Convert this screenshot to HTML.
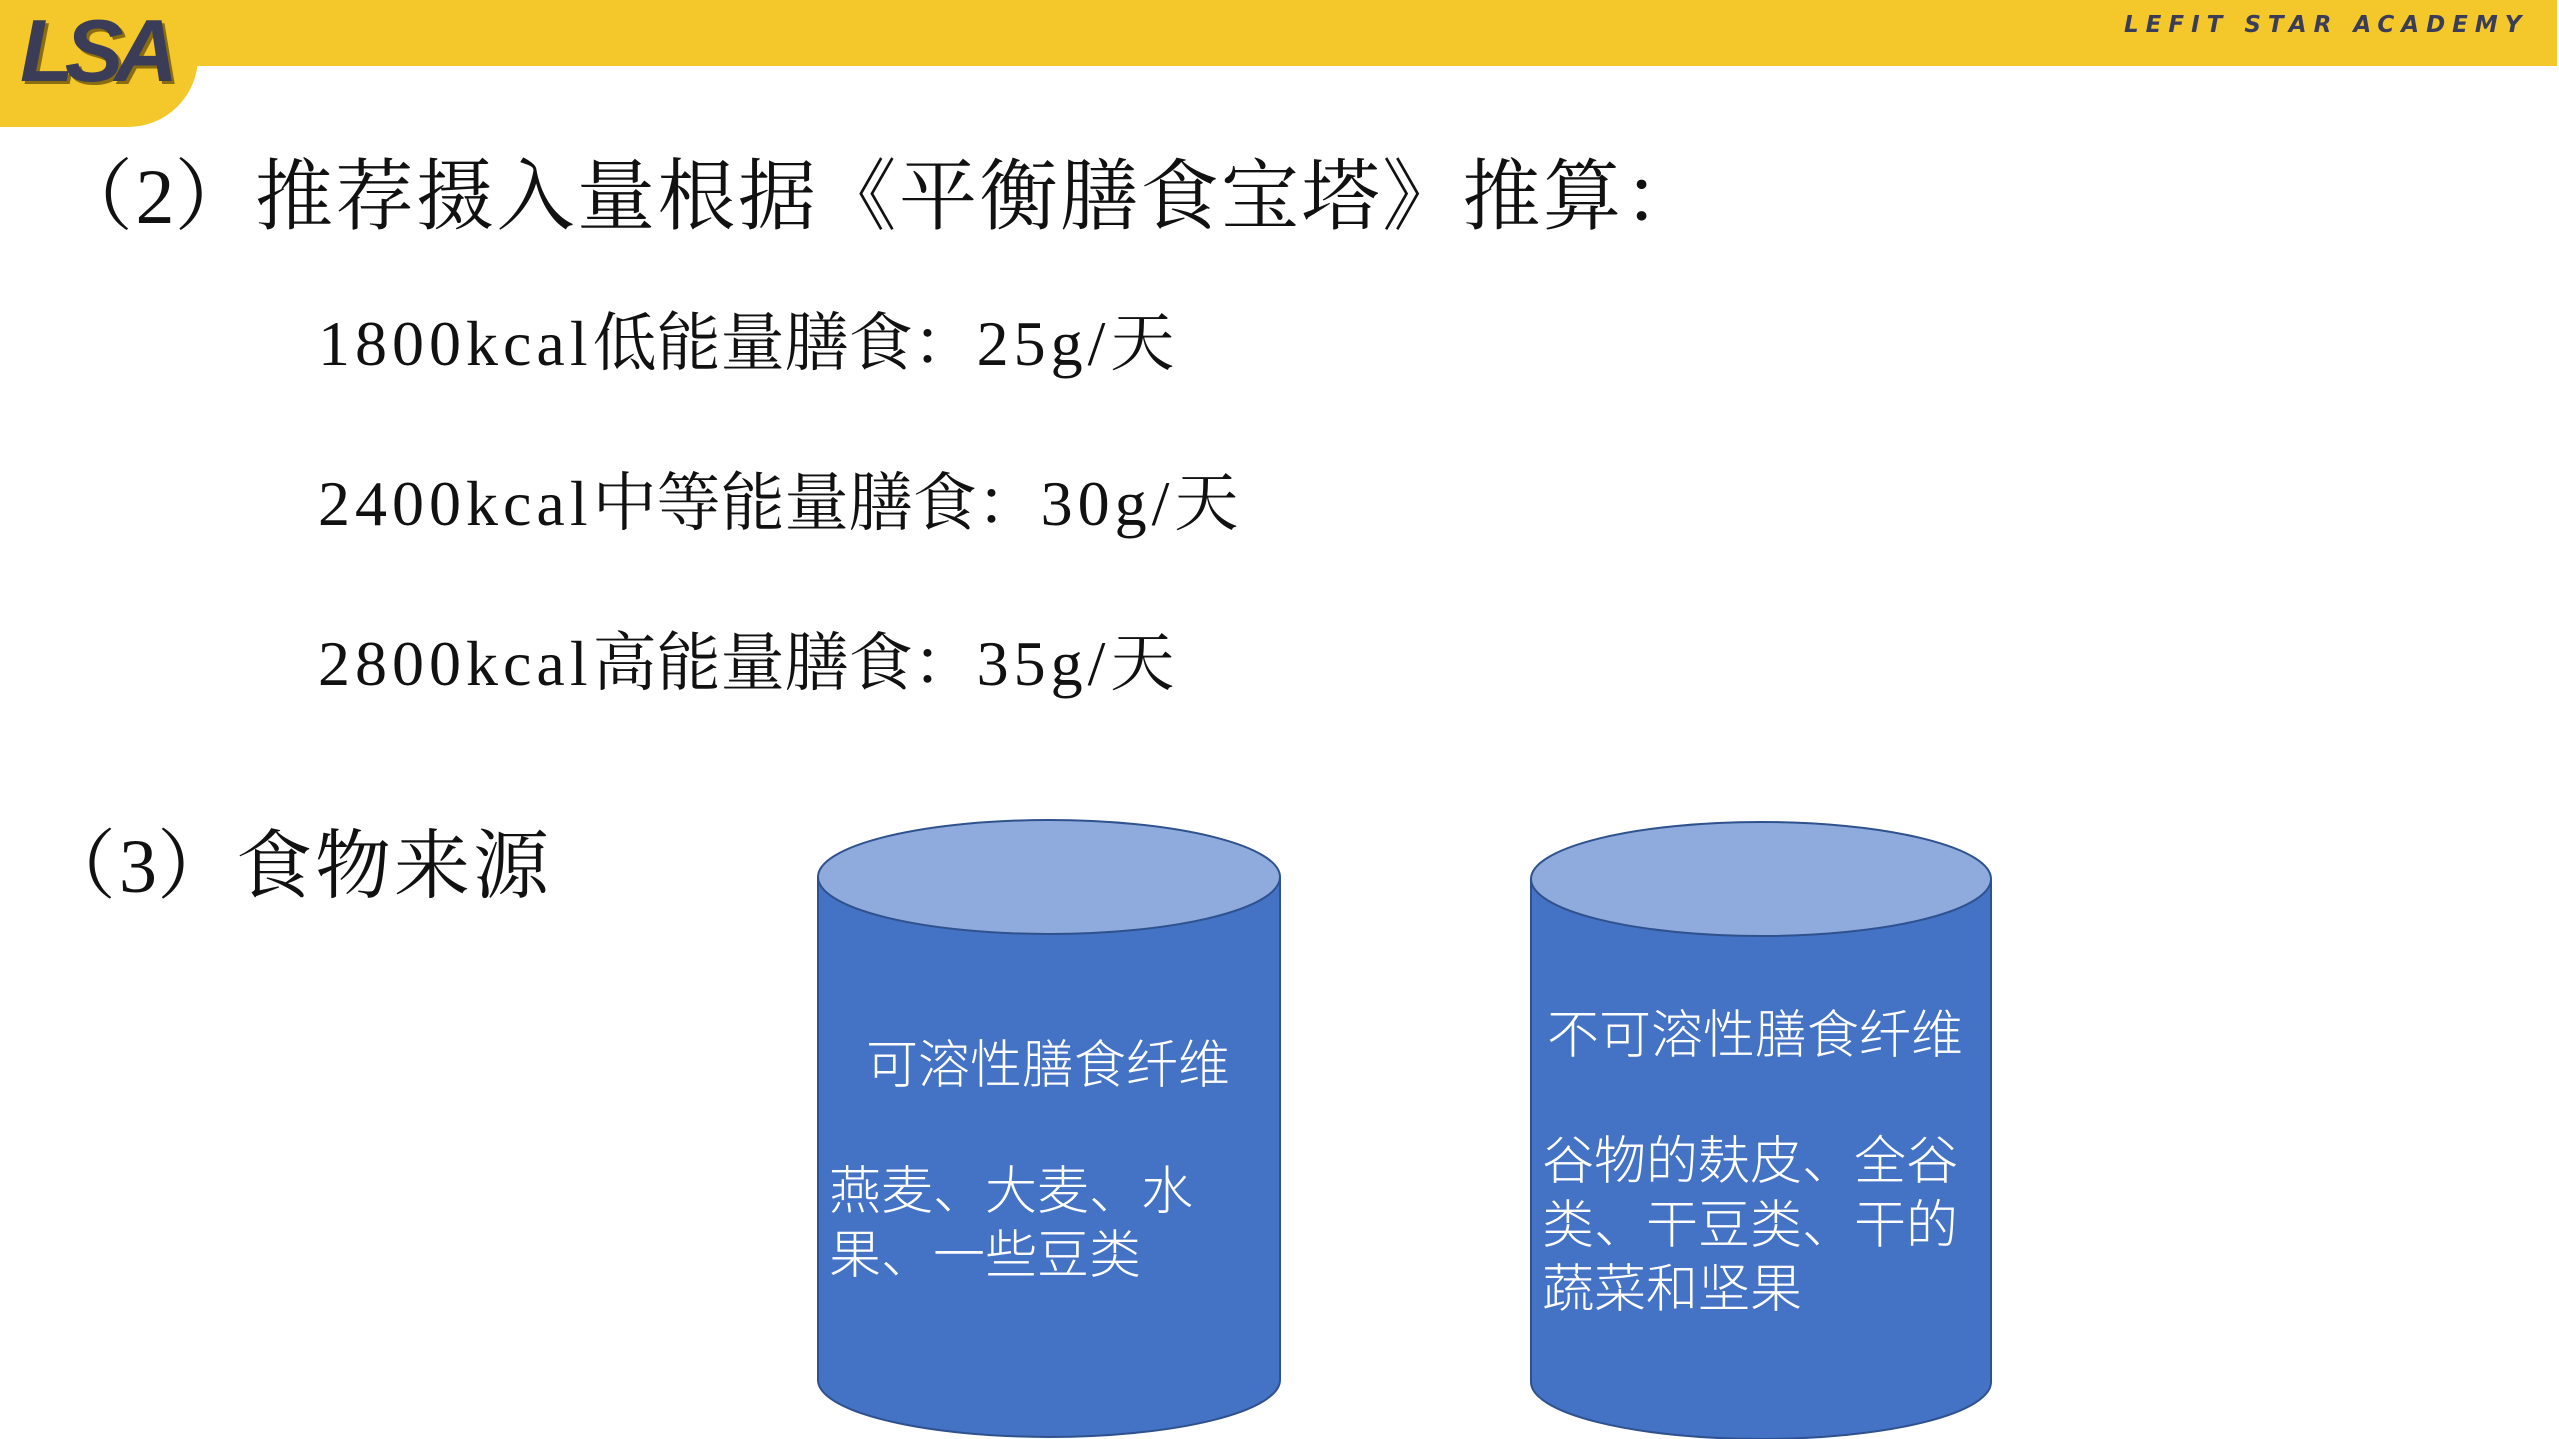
<!DOCTYPE html>
<html><head><meta charset="utf-8"><style>
html,body{margin:0;padding:0;background:#fff;}
body{width:2559px;height:1439px;position:relative;overflow:hidden;font-family:"Liberation Serif","Noto Serif CJK SC",serif;color:#111;}
.bar{position:absolute;left:0;top:0;width:2557px;height:66px;background:#F4C82B;}
.tab{position:absolute;left:0;top:0;width:198px;height:127px;background:#F4C82B;border-bottom-right-radius:70px;}
.logo{position:absolute;left:20px;top:0px;font-family:"Liberation Sans",sans-serif;font-weight:900;font-style:italic;font-size:88px;letter-spacing:-9px;color:#3B3D58;text-shadow:3px 3px 0 #8a6d10;}
.brand{position:absolute;left:2124px;top:12px;white-space:nowrap;font-family:"DejaVu Sans","Liberation Sans",sans-serif;font-weight:bold;font-style:italic;font-size:23px;letter-spacing:7px;color:#3B3D58;}
.t{position:absolute;white-space:nowrap;}
.m{font-family:"Liberation Serif",serif;letter-spacing:5px;}
.w{position:absolute;white-space:nowrap;color:#fff;font-family:"Liberation Sans","Noto Sans CJK SC",sans-serif;font-weight:300;}
</style></head><body>
<div class="bar"></div><div class="tab"></div>
<div class="logo">LSA</div>
<div class="brand">LEFIT STAR ACADEMY</div>

<div class="t" style="left:55px;top:134px;font-size:78px;letter-spacing:2.5px;">（<span class="m" style="letter-spacing:0">2</span>）推荐摄入量根据《平衡膳食宝塔》推算：</div>
<div class="t" style="left:318px;top:292px;font-size:64px;"><span class="m">1800kcal</span>低能量膳食：<span class="m">25g/</span>天</div>
<div class="t" style="left:318px;top:452px;font-size:64px;"><span class="m">2400kcal</span>中等能量膳食：<span class="m">30g/</span>天</div>
<div class="t" style="left:318px;top:612px;font-size:64px;"><span class="m">2800kcal</span>高能量膳食：<span class="m">35g/</span>天</div>
<div class="t" style="left:40px;top:805px;font-size:76px;letter-spacing:3px;">（<span class="m" style="letter-spacing:0">3</span>）食物来源</div>

<svg style="position:absolute;left:0;top:0" width="2559" height="1439">
 <g stroke="#2F528F" stroke-width="2">
  <path d="M818 877 L818 1380 A231 57 0 0 0 1280 1380 L1280 877 Z" fill="#4472C4"/>
  <ellipse cx="1049" cy="877" rx="231" ry="57" fill="#8FAADC"/>
  <path d="M1531 879 L1531 1382 A230 57 0 0 0 1991 1382 L1991 879 Z" fill="#4472C4"/>
  <ellipse cx="1761" cy="879" rx="230" ry="57" fill="#8FAADC"/>
 </g>
</svg>

<div class="w" style="left:866px;top:1023px;font-size:52px;">可溶性膳食纤维</div>
<div class="w" style="left:829px;top:1160px;font-size:52px;line-height:64px;">燕麦、大麦、水<br>果、一些豆类</div>
<div class="w" style="left:1547px;top:993px;font-size:52px;">不可溶性膳食纤维</div>
<div class="w" style="left:1542px;top:1130px;font-size:52px;line-height:64px;">谷物的麸皮、全谷<br>类、干豆类、干的<br>蔬菜和坚果</div>
</body></html>
